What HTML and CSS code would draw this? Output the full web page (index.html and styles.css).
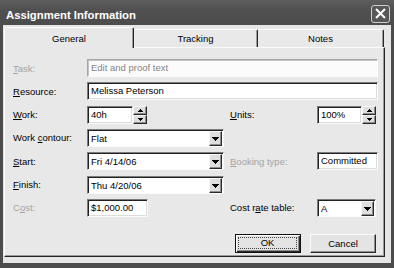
FILE: index.html
```html
<!DOCTYPE html>
<html>
<head>
<meta charset="utf-8">
<link rel="stylesheet" href="styles.css">
</head>
<body>
<div class="window">
  <div class="titlebar">
    <span class="title">Assignment Information</span>
    <span class="close"><svg width="17" height="16" viewBox="0 0 17 16"><path d="M4 3L13 12M13 3L4 12" stroke="#fff" stroke-width="2" fill="none"/></svg></span>
  </div>
  <div class="frame">
    <div class="client">
      <div class="tabs">
        <div class="tab active t1">General</div>
        <div class="tab t2">Tracking</div>
        <div class="tab t3">Notes</div>
      </div>
      <div class="panel">
        <div class="form">
          <span class="lbl c1 disabled"><u>T</u>ask:</span>
          <div class="box wide off">Edit and proof text</div>

          <span class="lbl c1"><u>R</u>esource:</span>
          <div class="box wide">Melissa Peterson</div>

          <span class="lbl c1"><u>W</u>ork:</span>
          <div class="spin c2 w-work">
            <div class="box">40h</div>
            <div class="arrows">
              <span class="btn sbtn"><svg width="5" height="3" viewBox="0 0 5 3"><path d="M2 0h1v1H2zM1 1h3v1H1zM0 2h5v1H0z"/></svg></span>
              <span class="btn sbtn"><svg width="5" height="3" viewBox="0 0 5 3"><path d="M0 0h5v1H0zM1 1h3v1H1zM2 2h1v1H2z"/></svg></span>
            </div>
          </div>
          <span class="lbl c4"><u>U</u>nits:</span>
          <div class="spin c5 w-units">
            <div class="box">100%</div>
            <div class="arrows">
              <span class="btn sbtn"><svg width="5" height="3" viewBox="0 0 5 3"><path d="M2 0h1v1H2zM1 1h3v1H1zM0 2h5v1H0z"/></svg></span>
              <span class="btn sbtn"><svg width="5" height="3" viewBox="0 0 5 3"><path d="M0 0h5v1H0zM1 1h3v1H1zM2 2h1v1H2z"/></svg></span>
            </div>
          </div>

          <span class="lbl c1">Work <u>c</u>ontour:</span>
          <div class="combo c2">
            <span class="val">Flat</span>
            <span class="btn dbtn"><svg width="7" height="4" viewBox="0 0 7 4"><path d="M0 0h7v1H0zM1 1h5v1H1zM2 2h3v1H2zM3 3h1v1H3z"/></svg></span>
          </div>

          <span class="lbl c1"><u>S</u>tart:</span>
          <div class="combo c2">
            <span class="val">Fri 4/14/06</span>
            <span class="btn dbtn"><svg width="7" height="4" viewBox="0 0 7 4"><path d="M0 0h7v1H0zM1 1h5v1H1zM2 2h3v1H2zM3 3h1v1H3z"/></svg></span>
          </div>
          <span class="lbl c4 disabled"><u>B</u>ooking type:</span>
          <div class="box c5">Committed</div>

          <span class="lbl c1"><u>F</u>inish:</span>
          <div class="combo c2">
            <span class="val">Thu 4/20/06</span>
            <span class="btn dbtn"><svg width="7" height="4" viewBox="0 0 7 4"><path d="M0 0h7v1H0zM1 1h5v1H1zM2 2h3v1H2zM3 3h1v1H3z"/></svg></span>
          </div>

          <span class="lbl c1 disabled">C<u>o</u>st:</span>
          <div class="box c2 w-cost">$1,000.00</div>
          <span class="lbl c4">Cost r<u>a</u>te table:</span>
          <div class="combo c5 w-rate">
            <span class="val">A</span>
            <span class="btn dbtn"><svg width="7" height="4" viewBox="0 0 7 4"><path d="M0 0h7v1H0zM1 1h5v1H1zM2 2h3v1H2zM3 3h1v1H3z"/></svg></span>
          </div>
        </div>
        <div class="buttons">
          <div class="pbtn default"><span class="focus">OK</span></div>
          <div class="pbtn">Cancel</div>
        </div>
      </div>
    </div>
  </div>
</div>
</body>
</html>
```
FILE: styles.css
```css
* { box-sizing: border-box; }
html, body { margin: 0; padding: 0; }
body {
  width: 394px;
  height: 268px;
  overflow: hidden;
  background: #4c4c4c;
  font-family: "Liberation Sans", Arial, sans-serif;
  font-size: 9.5px;
  color: #000;
}
.window {
  width: 394px;
  height: 268px;
  display: flex;
  flex-direction: column;
  background: #4c4c4c;
}
.titlebar {
  height: 25px;
  flex: none;
  display: flex;
  align-items: flex-start;
  justify-content: space-between;
  background: linear-gradient(#5e5e5e, #505050 40%, #4c4c4c);
  padding: 0 4px 0 6px;
}
.title {
  margin-top: 9px;
  color: #fff;
  font-weight: bold;
  font-size: 11.3px;
  line-height: 13px;
  white-space: nowrap;
}
.close {
  margin-top: 5px;
  width: 19px;
  height: 18px;
  border: 1px solid #cfcfcf;
  border-radius: 3px;
  background: #575757;
  display: flex;
  align-items: center;
  justify-content: center;
}
.close svg { display: block; }
.frame {
  flex: 1;
  padding: 0 3px 5px 3px;
  display: flex;
}
.client {
  flex: 1;
  background: #e6e6e6;
  padding: 2px 0 0 1px;
  display: flex;
  flex-direction: column;
}
.tabs {
  height: 20px;
  display: flex;
  align-items: flex-end;
}
.tab {
  height: 18px;
  background: #e9e9e9;
  border-top: 1px solid #fbfbfb;
  border-left: 1px solid #fbfbfb;
  border-right: 1px solid #262626;
  border-top-left-radius: 2px;
  border-top-right-radius: 2px;
  box-shadow: inset -1px 0 0 #9c9c9c;
  text-align: center;
  line-height: 17px;
}
.tab.active {
  height: 21px;
  margin-bottom: -1px;
  position: relative;
  z-index: 1;
  background: #e8e8e8;
  box-shadow: inset -1px 0 0 #9c9c9c;
  line-height: 21px;
}
.t1 { width: 130px; }
.t2 { width: 124px; border-left: none; }
.t3 { width: 126px; border-left: none; }
.panel {
  width: 381px;
  height: 210px;
  flex: none;
  background: #e8e8e8;
  border-top: 1px solid #fbfbfb;
  border-left: 1px solid #fbfbfb;
  border-right: 1px solid #262626;
  border-bottom: 1px solid #262626;
  box-shadow: inset -1px -1px 0 #9c9c9c;
  padding: 11px 6px 0 8px;
}
.form {
  display: grid;
  grid-template-columns: 74px 137px 6px 87px 61px;
  grid-template-rows: repeat(7, 18px);
  row-gap: 5.33px;
  align-items: center;
}
.lbl { white-space: nowrap; }
.c1 { grid-column: 1; }
.c2 { grid-column: 2; }
.c4 { grid-column: 4; }
.c5 { grid-column: 5; }
.wide { grid-column: 2 / 6; }
.disabled { color: #a4a4a4; }
u { text-decoration-thickness: 1px; text-underline-offset: 1px; }
.box {
  height: 18px;
  background: #fff;
  border: 1px solid;
  border-color: #7c7c7c #fbfbfb #fbfbfb #7c7c7c;
  box-shadow: inset 1px 1px 0 #222, inset -1px -1px 0 #dcdcdc;
  padding: 0 2px 0 3px;
  line-height: 16px;
  white-space: nowrap;
  overflow: hidden;
}
.box.off {
  color: #858585;
  background: #fbfbfb;
  border-color: #a6a6a6 #fbfbfb #fbfbfb #a6a6a6;
  box-shadow: inset 1px 1px 0 #c4c4c4;
}
.spin {
  display: flex;
  height: 18px;
  justify-self: start;
}
.spin .box { flex: 1; }
.w-work { width: 60px; }
.w-units { width: 59px; }
.w-cost { width: 61px; justify-self: start; }
.w-rate { width: 59px; justify-self: start; }
.arrows {
  width: 14px;
  display: flex;
  flex-direction: column;
}
.btn {
  background: #dedede;
  border: 1px solid;
  border-color: #f6f6f6 #2a2a2a #2a2a2a #f6f6f6;
  box-shadow: inset -1px -1px 0 #8e8e8e;
  display: flex;
  align-items: center;
  justify-content: center;
}
.btn svg { display: block; fill: #000; }
.sbtn { height: 9px; }
.combo {
  height: 18px;
  display: flex;
  background: #fff;
  border: 1px solid;
  border-color: #7c7c7c #fbfbfb #fbfbfb #7c7c7c;
  box-shadow: inset 1px 1px 0 #222;
  padding: 1px 1px 0 1px;
}
.combo .val {
  flex: 1;
  line-height: 15px;
  padding-left: 2px;
  white-space: nowrap;
}
.dbtn {
  width: 13px;
  height: 15px;
  flex: none;
}
.dbtn svg { margin-top: 1px; }
.buttons {
  display: flex;
  justify-content: flex-end;
  gap: 9px;
  margin-top: 17px;
  padding-right: 2px;
}
.pbtn {
  width: 66px;
  height: 19px;
  background: #e4e4e4;
  border: 1px solid;
  border-color: #fbfbfb #2a2a2a #2a2a2a #fbfbfb;
  box-shadow: inset -1px -1px 0 #8e8e8e;
  display: flex;
  align-items: center;
  justify-content: center;
}
.pbtn.default {
  border: 1px solid #111;
  box-shadow: inset 1px 1px 0 #fbfbfb, inset -1px -1px 0 #2a2a2a, inset -2px -2px 0 #8e8e8e;
  padding: 2px 3px 3px 2px;
  align-items: stretch;
}
.focus {
  flex: 1;
  border: 1px dotted #444;
  display: flex;
  align-items: center;
  justify-content: center;
}
```
